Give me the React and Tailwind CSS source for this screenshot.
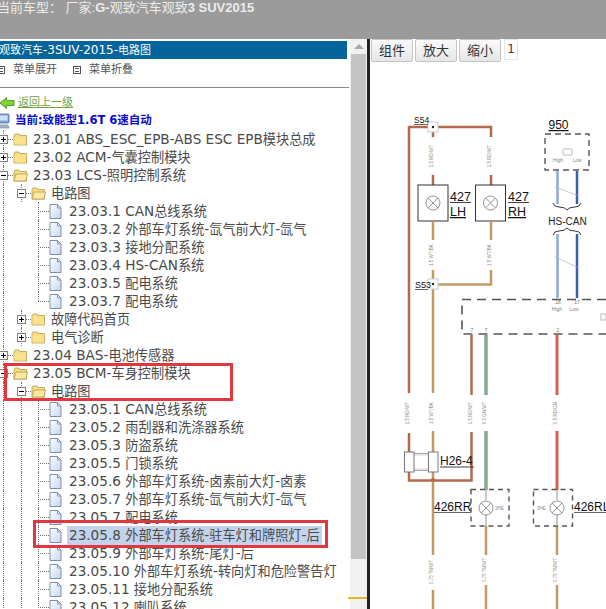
import React from "react";

// ─── Tree data ────────────────────────────────────────────────────────────────

const TREE = [
  { kind: "folder", depth: 0, text: "23.01 ABS_ESC_EPB-ABS ESC EPB模块总成" },
  { kind: "folder", depth: 0, text: "23.02 ACM-气囊控制模块" },
  { kind: "folder", depth: 0, open: true, text: "23.03 LCS-照明控制系统" },
  { kind: "folder", depth: 1, open: true, text: "电路图" },
  { kind: "file", text: "23.03.1 CAN总线系统" },
  { kind: "file", text: "23.03.2 外部车灯系统-氙气前大灯-氙气" },
  { kind: "file", text: "23.03.3 接地分配系统" },
  { kind: "file", text: "23.03.4 HS-CAN系统" },
  { kind: "file", text: "23.03.5 配电系统" },
  { kind: "file", last: true, text: "23.03.7 配电系统" },
  { kind: "folder", depth: 1, text: "故障代码首页" },
  { kind: "folder", depth: 1, text: "电气诊断" },
  { kind: "folder", depth: 0, text: "23.04 BAS-电池传感器" },
  { kind: "folder", depth: 0, open: true, text: "23.05 BCM-车身控制模块" },
  { kind: "folder", depth: 1, open: true, text: "电路图" },
  { kind: "file", mid: true, text: "23.05.1 CAN总线系统" },
  { kind: "file", mid: true, text: "23.05.2 雨刮器和洗涤器系统" },
  { kind: "file", mid: true, text: "23.05.3 防盗系统" },
  { kind: "file", mid: true, text: "23.05.5 门锁系统" },
  { kind: "file", mid: true, text: "23.05.6 外部车灯系统-卤素前大灯-卤素" },
  { kind: "file", mid: true, text: "23.05.7 外部车灯系统-氙气前大灯-氙气" },
  { kind: "file", mid: true, text: "23.05.7 配电系统" },
  { kind: "file", mid: true, selected: true, text: "23.05.8 外部车灯系统-驻车灯和牌照灯-后" },
  { kind: "file", mid: true, text: "23.05.9 外部车灯系统-尾灯-后" },
  { kind: "file", mid: true, text: "23.05.10 外部车灯系统-转向灯和危险警告灯" },
  { kind: "file", mid: true, text: "23.05.11 接地分配系统" },
  { kind: "file", mid: true, text: "23.05.12 喇叭系统" },
];

// Chinese runs sit a touch smaller than the latin around them in the original
function Mixed({ text, cjk }) {
  return text.split(/([\u4e00-\u9fff]+)/).map((part, i) =>
    i % 2 ? <span key={i} className={cjk}>{part}</span> : part
  );
}

// ─── Tree icons ───────────────────────────────────────────────────────────────

function FolderIcon({ open }) {
  return (
    <svg width="15" height="14" viewBox="0 0 15 14" className="shrink-0">
      <path d="M1 3.5 L2 2 H6 L7 3.5 H13.5 V13 H1 Z" fill="#f7dd80" stroke="#b59a50" strokeWidth="0.8" />
      {open ? (
        <path d="M1 13 L3 6 H14.5 L13 13 Z" fill="#fbe9a0" stroke="#b59a50" strokeWidth="0.8" />
      ) : (
        <rect x="1.5" y="5" width="11.5" height="7.5" fill="#f9e28c" />
      )}
    </svg>
  );
}

function FileIcon() {
  return (
    <svg width="13" height="15" viewBox="0 0 13 15" className="shrink-0">
      <defs>
        <linearGradient id="pageFill" x1="0" y1="0" x2="1" y2="1">
          <stop offset="0" stopColor="#ffffff" />
          <stop offset="1" stopColor="#c4d6f0" />
        </linearGradient>
      </defs>
      <path d="M1 .5 H8.5 L12 4 V14.5 H1 Z" fill="url(#pageFill)" stroke="#6f86a8" strokeWidth="0.9" />
      <path d="M8.5 .5 V4 H12" fill="none" stroke="#6f86a8" strokeWidth="0.8" />
    </svg>
  );
}

function ExpandBox({ open }) {
  return (
    <span className="relative w-[9px] h-[9px] shrink-0 border border-[#808080] bg-white">
      <span className="absolute left-[1px] top-[3px] w-[5px] h-px bg-black" />
      {!open && <span className="absolute left-[3px] top-[1px] w-px h-[5px] bg-black" />}
    </span>
  );
}

function Guide({ className = "left-[4px]", half }) {
  return (
    <span className={`absolute top-0 border-l border-dotted border-[#777] ${half ? "h-[9px]" : "bottom-0"} ${className}`} />
  );
}

function IndentCell({ guide }) {
  return <span className="relative block w-[18px] h-full shrink-0">{guide && <Guide />}</span>;
}

function TreeRow({ row }) {
  const label = "text-[13.6px] text-[#4a4a4a] whitespace-nowrap leading-[18px]";
  const text = <Mixed text={row.text} cjk="text-[13.2px]" />;

  if (row.kind === "folder") {
    return (
      <div className="flex h-[18px] items-center">
        {row.depth === 1 && <IndentCell guide />}
        <span className="relative flex w-[14px] h-full items-center shrink-0">
          <Guide />
          <span className="relative flex"><ExpandBox open={row.open} /></span>
          <span className="flex-1 border-t border-dotted border-[#777]" />
        </span>
        <FolderIcon open={row.open} />
        <span className={`ml-[5px] ${label}`}>{text}</span>
      </div>
    );
  }

  return (
    <div className="flex h-[18px] items-center">
      <IndentCell guide />
      <IndentCell guide={row.mid} />
      <span className="relative flex w-[14px] h-full items-center shrink-0">
        <Guide className="left-[3px]" half={row.last} />
        <span className="ml-[3px] flex-1 border-t border-dotted border-[#777]" />
      </span>
      <FileIcon />
      <span className={`ml-[5px] px-[2px] ${label} ${row.selected ? "bg-[#c3d4ea]" : ""}`}>{text}</span>
    </div>
  );
}

function MenuGlyph() {
  return (
    <span className="flex flex-col justify-between w-[8px] h-[8px] border border-[#555] px-px py-px shrink-0">
      <span className="h-px bg-[#555]" />
      <span className="h-px bg-[#555]" />
    </span>
  );
}

// ─── Wiring diagram ───────────────────────────────────────────────────────────

const BROWN = "#b3694a";
const TAN = "#c39a66";
const GREEN = "#8ba98f";
const RED = "#d8614f";

function WireLabel({ x, y, text }) {
  return (
    <text x={x} y={y} fontSize="4.5" fill="#8a8a8a" textAnchor="middle" transform={`rotate(-90 ${x} ${y})`}>
      {text}
    </text>
  );
}

function Lamp({ cx, cy, r = 7 }) {
  const d = r * 0.7;
  return (
    <g stroke="#888" strokeWidth="0.9" fill="#fff">
      <circle cx={cx} cy={cy} r={r} />
      <path d={`M${cx - d} ${cy - d} L${cx + d} ${cy + d} M${cx + d} ${cy - d} L${cx - d} ${cy + d}`} />
    </g>
  );
}

function Wire({ d, color, w = 2.5 }) {
  return <path d={d} fill="none" stroke={color} strokeWidth={w} />;
}

function Diagram() {
  const dash = { fill: "none", stroke: "#555", strokeWidth: 1.4, strokeDasharray: "6 4" };
  return (
    <svg viewBox="370 66 236 543" className="block w-[236px] h-[543px] font-['Liberation_Sans',sans-serif]">
      {/* top feed */}
      <Wire d="M409 393 V127 H491 V137" color={BROWN} />
      <Wire d="M433 127 V137 M433 175 V185 M491 175 V185" color={BROWN} />
      <WireLabel x={433} y={156} text="1.5 RD/WT" />
      <WireLabel x={491} y={156} text="1.5 RD/WT" />
      <rect x="428" y="122" width="10" height="10" fill="#fff" stroke="#c9c9d6" />
      <circle cx="433" cy="127" r="1.2" fill="#222" />
      <text x="414" y="123" fontSize="8.5" fill="#222">S54</text>
      <path d="M414 124.5 H428" stroke="#222" strokeWidth="0.7" />

      {/* lamps 427 */}
      <rect x="418" y="185" width="30" height="36" fill="#fff" stroke="#333" />
      <rect x="475.5" y="185" width="30" height="36" fill="#fff" stroke="#333" />
      <Lamp cx={433} cy={203} />
      <Lamp cx={490.5} cy={203} />
      <text x="450" y="201" fontSize="12.5" fill="#111">427</text>
      <path d="M450 202.5 H471" stroke="#111" strokeWidth="0.8" />
      <text x="450" y="216" fontSize="12.5" fill="#111" textDecoration="underline">LH</text>
      <text x="508" y="201" fontSize="12.5" fill="#111">427</text>
      <path d="M508 202.5 H529" stroke="#111" strokeWidth="0.8" />
      <text x="508" y="216" fontSize="12.5" fill="#111" textDecoration="underline">RH</text>

      {/* splice S53 */}
      <Wire d="M433 221 V240 M433 270 V393 M491 221 V240 M491 270 V284.5 H433" color={TAN} />
      <WireLabel x={433} y={255} text="1.5 WT/BK" />
      <WireLabel x={491} y={255} text="1.5 WT/BK" />
      <rect x="428" y="279" width="10" height="10" fill="#fff" stroke="#c9c9d6" />
      <circle cx="433" cy="284" r="1.2" fill="#222" />
      <text x="415" y="288" fontSize="9" fill="#111">S53</text>
      <path d="M415 289.5 H428" stroke="#222" strokeWidth="0.7" />

      {/* 950 */}
      <text x="558.5" y="129" fontSize="12" fill="#111" textAnchor="middle" textDecoration="underline">950</text>
      <rect x="545" y="134" width="44" height="36" {...dash} />
      <rect x="563" y="149" width="9" height="6" rx="1" fill="#fff" stroke="#bbb" />
      <text x="558" y="162" fontSize="5" fill="#888" textAnchor="middle">High</text>
      <text x="577" y="162" fontSize="5" fill="#888" textAnchor="middle">Low</text>

      {/* HS-CAN pair */}
      <Wire d="M557.5 171 V204" color="#8ea7d8" />
      <Wire d="M577 171 V204" color="#3c60a8" />
      <path d="M555 187 L579 196" stroke="#aaa" strokeWidth="0.6" />
      <path d="M553 203 Q554 207 559 207 Q565 207 567 210 Q569 207 575 207 Q580 207 581 203" fill="none" stroke="#222" strokeWidth="0.9" />
      <text x="567.5" y="225" fontSize="10" fill="#222" textAnchor="middle">HS-CAN</text>
      <path d="M553 235 Q554 231 559 231 Q565 231 567 228 Q569 231 575 231 Q580 231 581 235" fill="none" stroke="#222" strokeWidth="0.9" />
      <Wire d="M557.5 234 V298" color="#8ea7d8" />
      <Wire d="M577 234 V298" color="#3c60a8" />
      <path d="M555 257 L579 268" stroke="#aaa" strokeWidth="0.6" />

      {/* module */}
      <path d="M606 299.5 H462 V334 H606" {...dash} strokeWidth="1.6" strokeDasharray="9 6" />
      <text x="558" y="304" fontSize="5" fill="#777" textAnchor="middle">18</text>
      <text x="577" y="304" fontSize="5" fill="#777" textAnchor="middle">17</text>
      <text x="557" y="311" fontSize="5" fill="#888" textAnchor="middle">High</text>
      <text x="574" y="311" fontSize="5" fill="#888" textAnchor="middle">Low</text>
      <text x="472" y="332" fontSize="5" fill="#777" textAnchor="middle">7</text>
      <text x="486" y="332" fontSize="5" fill="#777" textAnchor="middle">7</text>
      <text x="558" y="332" fontSize="5" fill="#777" textAnchor="middle">2</text>
      <rect x="601" y="314" width="5" height="6" fill="#fff" stroke="#bbb" />

      {/* drops from module */}
      <Wire d="M471.5 335 V395 M471.5 432 V480.5 H409 V472 M409 433 V452" color={BROWN} />
      <Wire d="M486 335 V395 M486 431 V490" color={GREEN} w={3.5} />
      <Wire d="M557 335 V395 M557 431 V490" color={RED} w={3} />
      <WireLabel x={409} y={413} text="1.5 RD/WT" />
      <WireLabel x={433} y={413} text="1.5 WT/BK" />
      <WireLabel x={471.5} y={413} text="1.5 RD/WT" />
      <WireLabel x={486} y={413} text="0.5 GN/WT" />
      <WireLabel x={557} y={413} text="0.5 RD/GN" />

      {/* H26-4 */}
      <Wire d="M433 431 V452 M433 472 V555 M433 590 V609 M486 526 V555 M486 585 V609 M557 526 V555 M557 585 V609" color={TAN} />
      <path d="M414 453.5 H428 M414 470.5 H428" stroke="#999" strokeWidth="0.9" />
      <path d="M414 455 H428 M414 469 H428" stroke="#ccc" strokeWidth="0.9" />
      <rect x="404.5" y="452" width="9.5" height="20" fill="#fff" stroke="#777" />
      <rect x="428.5" y="452" width="9.5" height="20" fill="#fff" stroke="#777" />
      <text x="440" y="465" fontSize="12" fill="#111">H26-4</text>
      <path d="M440 467 H474" stroke="#111" strokeWidth="0.8" />
      <circle cx="433" cy="480" r="2" fill={BROWN} />

      {/* rear lamps */}
      <WireLabel x={433} y={572} text="0.75 TN/WT" />
      <WireLabel x={486} y={570} text="0.75 TN/WT" />
      <WireLabel x={557} y={570} text="0.75 TN/WT" />
      <rect x="471" y="489.5" width="38" height="36.5" {...dash} strokeDasharray="5 4" />
      <rect x="533.5" y="489.5" width="39" height="36.5" {...dash} strokeDasharray="5 4" />
      <path d="M486 490 V500 M486 515 V526 M557 490 V500 M557 515 V526" stroke="#888" strokeWidth="0.9" />
      <Lamp cx={486} cy={508} />
      <Lamp cx={557} cy={508} />
      <text x="495" y="510" fontSize="4.5" fill="#888">3HE</text>
      <text x="537" y="510" fontSize="4.5" fill="#888">3HE</text>
      <text x="434" y="511" fontSize="12" fill="#111">426RR</text>
      <path d="M434 512.5 H471" stroke="#555" strokeWidth="0.9" />
      <text x="574" y="511" fontSize="12" fill="#111">426RL</text>
      <path d="M574 512.5 H606" stroke="#555" strokeWidth="0.9" />
    </svg>
  );
}

// ─── Page ─────────────────────────────────────────────────────────────────────

function ToolButton({ children }) {
  return (
    <button
      type="button"
      className="w-[42px] h-[23px] rounded-[2px] border border-[#c4c4c4] bg-gradient-to-b from-[#fafafa] to-[#e6e6e6] text-[13px] leading-none text-[#333]"
    >
      {children}
    </button>
  );
}

export default function App() {
  return (
    <div className="w-[606px] h-[609px] overflow-hidden bg-white flex flex-col font-['DejaVu_Sans','Noto_Sans_CJK_SC',sans-serif]">
      <div className="h-[39px] shrink-0 bg-[#9b9b9b] text-[13px] leading-[16px] -ml-[3px] text-[#ececec] font-['Liberation_Sans','Noto_Sans_CJK_SC',sans-serif] whitespace-pre">
        当前车型： 厂家:<span className="font-bold">G-</span>观致汽车观致<span className="font-bold">3 SUV2015</span>
      </div>

      <div className="flex flex-1 min-h-0">
        {/* Left tree panel */}
        <div className="relative w-[350px] shrink-0 overflow-hidden pt-[2px]">
          <div className="h-[18px] w-[347px] bg-[#04659c] text-white text-[12px] leading-[18px] whitespace-nowrap -indent-px">
            <Mixed text="观致汽车-3SUV-2015-电路图" cjk="text-[11px]" />
          </div>
          <div className="h-[22px] flex items-center text-[11px] text-[#555] -ml-[3px]">
            <MenuGlyph />
            <span className="ml-[8px]">菜单展开</span>
            <span className="ml-[16px]"><MenuGlyph /></span>
            <span className="ml-[8px]">菜单折叠</span>
          </div>
          <div className="mt-[6px] w-[349px] border-t border-[#8a8a8a]" />
          <div className="mt-[6px] h-[18px] flex items-center">
            <svg width="15" height="12" viewBox="0 0 15 12" className="shrink-0">
              <path d="M0 6 L6.5 .5 V3.5 H14 V8.5 H6.5 V11.5 Z" fill="#7fd32b" stroke="#3b8a17" strokeWidth="0.8" />
            </svg>
            <a className="ml-[3px] text-[11px] text-[#6da23f] underline whitespace-nowrap">返回上一级</a>
          </div>
          <div className="h-[18px] flex items-center">
            <svg width="13" height="16" viewBox="0 0 13 16" className="shrink-0 -ml-[3px]">
              <rect x="1" y="1" width="11" height="9" rx="1" fill="#7ea6dc" stroke="#4d6f9f" strokeWidth="0.8" />
              <rect x="2.5" y="2.5" width="8" height="5" fill="#cfe0f5" />
              <path d="M2 12 H11 L12 15 H1 Z" fill="#a9b6c6" stroke="#6f7f93" strokeWidth="0.6" />
            </svg>
            <span className="ml-[5px] text-[11.5px] font-bold text-[#0a0ad0] whitespace-nowrap">当前:致能型1.6T 6速自动</span>
          </div>

          <div className="-ml-px">
            {TREE.map((row, i) => (
              <TreeRow key={i} row={row} />
            ))}
          </div>

          {/* Annotation boxes drawn over the tree */}
          <div className="absolute left-[4px] top-[324px] w-[229px] h-[38px] border-[3px] border-[#e0383e]" />
          <div className="absolute left-[33px] top-[481px] w-[295px] h-[28px] border-[3px] border-[#e0383e]" />
        </div>

        {/* Scrollbar */}
        <div className="w-[17px] shrink-0 flex flex-col bg-[#f1f1f1]">
          <div className="h-[15px] flex items-center justify-center">
            <span className="w-0 h-0 border-x-[5px] border-x-transparent border-b-[5px] border-b-[#a8a8a8]" />
          </div>
          <div className="mx-px h-[505px] bg-[#c4c4c4]" />
          <div className="mt-[38px] -ml-[2px] h-[2px] bg-[#e3bb1e]" />
        </div>

        {/* Divider */}
        <div className="w-[3px] shrink-0 bg-[#222]" />

        {/* Diagram pane */}
        <div className="flex-1 min-w-0 overflow-hidden">
          <div className="h-[27px] flex items-start gap-[2px] pl-px">
            <ToolButton>组件</ToolButton>
            <ToolButton>放大</ToolButton>
            <ToolButton>缩小</ToolButton>
            <span className="ml-px w-[14px] h-[21px] border border-[#e6e6e6] text-center text-[12px] leading-[18px] text-[#7a2040]">1</span>
          </div>
          <Diagram />
        </div>
      </div>
    </div>
  );
}
